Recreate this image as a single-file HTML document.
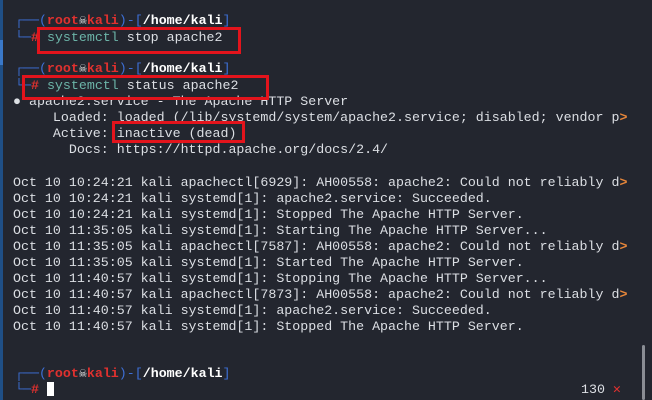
<!DOCTYPE html>
<html><head><style>
body{margin:0;width:652px;height:400px;background:#23262f;overflow:hidden;position:relative;font-family:"Liberation Mono","DejaVu Sans Mono",monospace;font-size:13.3px;color:#dcdfe4}
.l{position:absolute;left:13px;height:16px;line-height:16px;white-space:pre}
.b{color:#3d6fd6}.r{color:#e0312f;font-weight:bold}.w{color:#fff;font-weight:bold}.c{color:#6cb4a8}.o{color:#e8873a;font-weight:bold}
.sk{color:#e4e4e4;font-weight:normal;font-family:"DejaVu Sans Mono",monospace}
.box{position:absolute;border:3px solid #e3141c;box-sizing:border-box}
.strip{position:absolute;left:0;top:0;width:3px;height:400px;background:#1f4f86}
</style></head><body>
<div class="strip"></div>
<div style="position:absolute;left:0;top:40px;width:3px;height:25px;background:#3a78c8"></div>
<div class="l" style="top:13px;left:15px"><span class="b">┌──(</span><span class="r">root<span class="sk">☠</span>kali</span><span class="b">)-[</span><span class="w">/home/kali</span><span class="b">]</span></div>
<div class="l" style="top:30px;left:15px"><span class="b">└─</span><span class="r">#</span> <span class="c">systemctl</span> stop apache2</div>
<div class="l" style="top:61px;left:15px"><span class="b">┌──(</span><span class="r">root<span class="sk">☠</span>kali</span><span class="b">)-[</span><span class="w">/home/kali</span><span class="b">]</span></div>
<div class="l" style="top:78px;left:15px"><span class="b">└─</span><span class="r">#</span> <span class="c">systemctl</span> status apache2</div>
<div class="l" style="top:94px">● apache2.service - The Apache HTTP Server</div>
<div class="l" style="top:110px">     Loaded: loaded (/lib/systemd/system/apache2.service; disabled; vendor p<span class="o">&gt;</span></div>
<div class="l" style="top:126px">     Active: inactive (dead)</div>
<div class="l" style="top:142px">       Docs: https://httpd.apache.org/docs/2.4/</div>
<div class="l" style="top:175px">Oct 10 10:24:21 kali apachectl[6929]: AH00558: apache2: Could not reliably d<span class="o">&gt;</span></div>
<div class="l" style="top:191px">Oct 10 10:24:21 kali systemd[1]: apache2.service: Succeeded.</div>
<div class="l" style="top:207px">Oct 10 10:24:21 kali systemd[1]: Stopped The Apache HTTP Server.</div>
<div class="l" style="top:223px">Oct 10 11:35:05 kali systemd[1]: Starting The Apache HTTP Server...</div>
<div class="l" style="top:239px">Oct 10 11:35:05 kali apachectl[7587]: AH00558: apache2: Could not reliably d<span class="o">&gt;</span></div>
<div class="l" style="top:255px">Oct 10 11:35:05 kali systemd[1]: Started The Apache HTTP Server.</div>
<div class="l" style="top:271px">Oct 10 11:40:57 kali systemd[1]: Stopping The Apache HTTP Server...</div>
<div class="l" style="top:287px">Oct 10 11:40:57 kali apachectl[7873]: AH00558: apache2: Could not reliably d<span class="o">&gt;</span></div>
<div class="l" style="top:303px">Oct 10 11:40:57 kali systemd[1]: apache2.service: Succeeded.</div>
<div class="l" style="top:319px">Oct 10 11:40:57 kali systemd[1]: Stopped The Apache HTTP Server.</div>
<div class="l" style="top:366px;left:15px"><span class="b">┌──(</span><span class="r">root<span class="sk">☠</span>kali</span><span class="b">)-[</span><span class="w">/home/kali</span><span class="b">]</span></div>
<div class="l" style="top:382px;left:15px"><span class="b">└─</span><span class="r">#</span> <span style="display:inline-block;width:7px;height:14px;background:#fff;vertical-align:middle"></span></div>
<div class="l" style="top:382px;left:581px">130 <span style="color:#e0312f">✕</span></div>
<div class="box" style="left:37px;top:27px;width:204px;height:27px"></div>
<div class="box" style="left:22px;top:75px;width:247px;height:25px"></div>
<div class="box" style="left:112px;top:121px;width:133px;height:22px"></div>
<div style="position:absolute;left:642px;top:345px;width:3px;height:55px;background:#8a8d94;border-radius:2px"></div>
</body></html>
